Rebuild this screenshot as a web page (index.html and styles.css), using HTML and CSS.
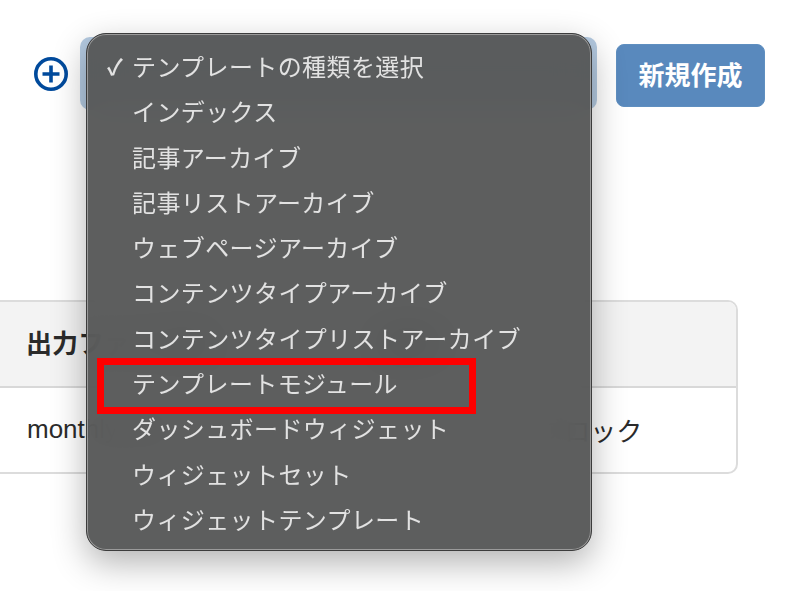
FILE: index.html
```html
<!DOCTYPE html>
<html lang="ja">
<head>
<meta charset="utf-8">
<title>テンプレートの種類を選択</title>
<link rel="stylesheet" href="styles.css">
</head>
<body>
<div class="page">
  <div class="toolbar">
    <svg class="add-icon" viewBox="0 0 34 34" aria-hidden="true">
      <circle cx="17" cy="17" r="15.2" fill="none" stroke="#004a9c" stroke-width="3.6"/>
      <path d="M17 8.5V25.500M8.500 17H25.500" fill="none" stroke="#004a9c" stroke-width="3.600"/>
    </svg>
    <div class="select-box"></div>
    <button class="create">新規作成</button>
  </div>
  <div class="table-card">
    <div class="row head">
      <div class="cell-a">出力ファイル名</div>
      <div class="cell-b">種類</div>
    </div>
    <div class="row">
      <div class="cell-a">monthly.html</div>
      <div class="cell-b">テンプレートブロック</div>
    </div>
  </div>
</div>
<div class="menu">
  <div class="item"><span class="check">✓</span>テンプレートの種類を選択</div>
  <div class="item">インデックス</div>
  <div class="item">記事アーカイブ</div>
  <div class="item">記事リストアーカイブ</div>
  <div class="item">ウェブページアーカイブ</div>
  <div class="item">コンテンツタイプアーカイブ</div>
  <div class="item">コンテンツタイプリストアーカイブ</div>
  <div class="item">テンプレートモジュール</div>
  <div class="item">ダッシュボードウィジェット</div>
  <div class="item">ウィジェットセット</div>
  <div class="item">ウィジェットテンプレート</div>
</div>
<div class="highlight"></div>
</body>
</html>
```
FILE: styles.css
```css
* { box-sizing: border-box; }
html, body { margin: 0; height: 100%; background: #fff; overflow: hidden; }
body {
  font-family: "Liberation Sans", "Noto Sans CJK JP", sans-serif;
  color: #2b2b2b;
  position: relative;
}
.page { width: 800px; height: 591px; overflow: hidden; padding-top: 37px; }
.toolbar {
  display: flex;
  align-items: center;
  height: 73px;
  padding-left: 34px;
}
.add-icon { width: 34px; height: 34px; flex: none; }
.select-box {
  width: 517px;
  height: 73px;
  margin-left: 12px;
  background: #b5cbe2;
  border-radius: 10px;
  flex: none;
}
.create {
  margin: 4px 0 0 19px;
  width: 149px;
  height: 63px;
  border: 1px solid #5f8fc0;
  border-radius: 8px;
  background: #5989bd;
  color: #fff;
  font: 700 26px "Noto Sans CJK JP", sans-serif;
  padding: 0 0 4px;
}
.table-card {
  margin: 190px 0 0 -12px;
  width: 750px;
  height: 174px;
  border: 2px solid #dcdcdc;
  border-radius: 10px;
  overflow: hidden;
  font-size: 26px;
}
.row {
  display: flex;
  align-items: center;
  height: 86px;
  padding: 0 0 4px 37px;
}
.head {
  height: 86px;
  background: #f3f3f3;
  border-bottom: 2px solid #d8d8d8;
  font-weight: 700;
  padding-left: 36px;
  padding-bottom: 6px;
}
.cell-a { width: 356px; flex: none; }
.cell-b { flex: 1; }
.menu {
  position: absolute;
  left: 86px;
  top: 33px;
  width: 506px;
  height: 518px;
  padding: 9px 0 0 45px;
  border: 1px solid #3c3c3c;
  border-radius: 20px;
  background: rgba(84, 85, 85, 0.95);
  backdrop-filter: blur(18px);
  box-shadow: inset 0 0 0 1px #9a9a9a, 0 12px 34px rgba(0, 0, 0, 0.3);
  color: #e2e2e2;
  font: 400 24px/45.3px "Noto Sans CJK JP", sans-serif;
  letter-spacing: 0.4px;
}
.item { position: relative; height: 45.3px; white-space: nowrap; }
.check {
  position: absolute;
  left: -25px;
  top: 0;
  font-size: 22px;
  font-weight: 700;
}
.highlight {
  position: absolute;
  left: 97px;
  top: 358px;
  width: 379px;
  height: 56px;
  border: 7px solid #fe0000;
}
```
